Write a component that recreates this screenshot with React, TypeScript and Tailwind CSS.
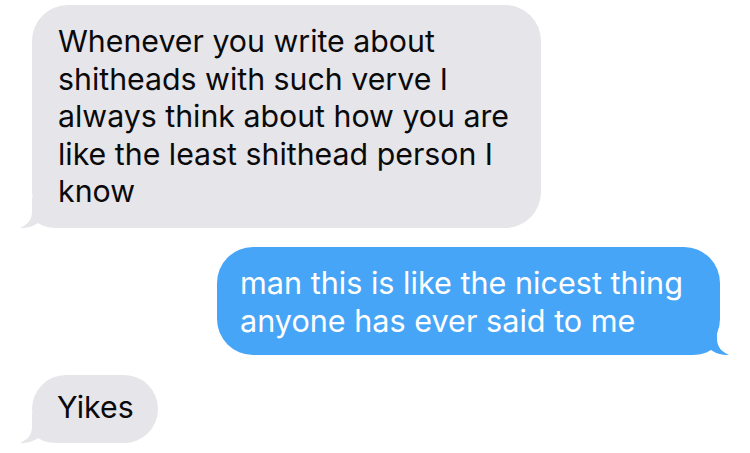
const grayTail = (
  <svg
    className="absolute bottom-0 left-[-12px]"
    width="50"
    height="30"
    viewBox="0 0 50 30"
  >
    <path
      d="M12 0 L12 14 C12 22 7 27 0 30 C8 30 14 28 18 25 C24 29 30 30 40 30 L50 30 L50 0 Z"
      fill="#e5e5ea"
    />
  </svg>
);

const blueTail = (
  <svg
    className="absolute bottom-0 right-[-9px]"
    width="50"
    height="30"
    viewBox="0 0 50 30"
  >
    <path
      d="M38 0 L38 14 C38 22 43 27 50 30 C42 30 36 28 32 25 C26 29 20 30 10 30 L0 30 L0 0 Z"
      fill="#47a5f7"
    />
  </svg>
);

const App = () => {
  return (
    <div
      className="w-[750px] h-[453px] bg-white flex flex-col overflow-hidden"
      style={{ fontFamily: "Inter, 'Liberation Sans', sans-serif" }}
    >
      <div className="relative ml-[32px] mt-[5px] w-[509px] h-[223px] rounded-[36px] bg-[#e5e5ea] pl-[26px] pt-[18px] text-[30.3px] leading-[37.6px] text-[#0a0a0a]">
        {grayTail}
        <div className="relative">
          <p>Whenever you write about</p>
          <p>shitheads with such verve I</p>
          <p>always think about how you are</p>
          <p>like the least shithead person I</p>
          <p>know</p>
        </div>
      </div>

      <div className="relative ml-[217px] mt-[19px] w-[503px] h-[108px] rounded-[36px] bg-[#47a5f7] pl-[23px] pt-[17px] text-[30.6px] leading-[37.6px] text-white">
        {blueTail}
        <div className="relative">
          <p>man this is like the nicest thing</p>
          <p>anyone has ever said to me</p>
        </div>
      </div>

      <div className="relative ml-[32px] mt-[20px] w-[126px] h-[68px] rounded-[34px] bg-[#e5e5ea] pl-[25px] pt-[14px] text-[30.3px] leading-[37.6px] text-[#0a0a0a]">
        {grayTail}
        <div className="relative">
          <p>Yikes</p>
        </div>
      </div>
    </div>
  );
};

export default App;
